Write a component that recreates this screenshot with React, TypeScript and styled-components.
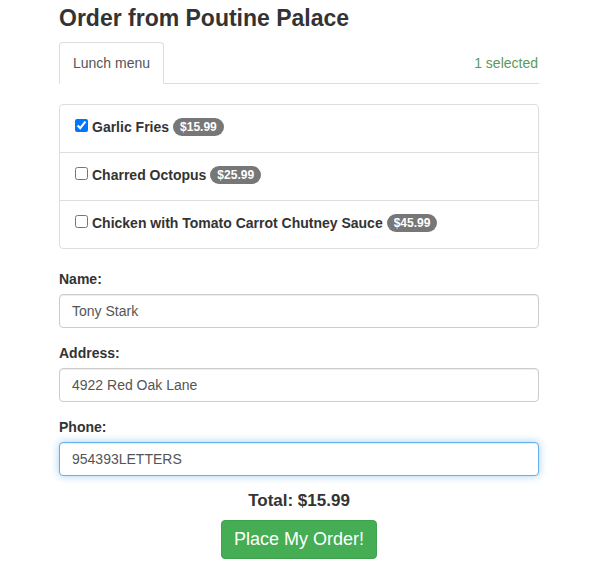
import React from "react";
import styled, { createGlobalStyle, css } from "styled-components";

const GlobalStyle = createGlobalStyle`
  body {
    margin: 0;
    background: #fff;
    color: #333;
    font-family: "Liberation Sans", Arial, sans-serif;
    font-size: 14px;
    line-height: 20px;
  }
  * {
    box-sizing: border-box;
  }
`;

const Page = styled.div`
  width: 480px;
  margin-left: 59px;
  padding-top: 6px;
`;

const Title = styled.h3`
  margin: 0 0 11px;
  font-size: 23px;
  line-height: 1.1;
  font-weight: bold;
  color: #333;
`;

const Tabs = styled.div`
  display: flex;
  align-items: center;
  border-bottom: 1px solid #ddd;
`;

const Tab = styled.div`
  margin-bottom: -1px;
  padding: 10px 13px;
  border: 1px solid #ddd;
  border-bottom-color: transparent;
  border-radius: 4px 4px 0 0;
  background: #fff;
  color: #555;
`;

const SelectedCount = styled.span`
  margin-left: auto;
  margin-right: 1px;
  color: #5a9a5a;
`;

const MenuList = styled.div`
  margin: 20px 0;
  border: 1px solid #ddd;
  border-radius: 4px;
`;

const MenuItem = styled.label`
  display: flex;
  align-items: flex-start;
  padding: 12px 15px 15px;
  font-weight: bold;
  & + & {
    border-top: 1px solid #ddd;
  }
`;

const Check = styled.input`
  width: 13px;
  height: 13px;
  margin: 2px 4px 0 0;
`;

const Badge = styled.span`
  display: inline-block;
  margin-left: 4px;
  padding: 3px 7px;
  font-size: 12px;
  line-height: 1;
  font-weight: bold;
  color: #fff;
  background: #777;
  border-radius: 10px;
  vertical-align: 1px;
`;

const FormGroup = styled.div`
  margin-bottom: 15px;
`;

const FieldLabel = styled.label`
  display: block;
  margin-bottom: 5px;
  font-weight: bold;
`;

const TextInput = styled.input<{ $focused?: boolean }>`
  display: block;
  width: 100%;
  height: 34px;
  padding: 6px 12px;
  font-family: inherit;
  font-size: 14px;
  line-height: 20px;
  color: #555;
  background: #fff;
  border: 1px solid #ccc;
  border-radius: 4px;
  box-shadow: inset 0 1px 1px rgba(0, 0, 0, 0.075);
  outline: none;
  ${(p) =>
    p.$focused &&
    css`
      border-color: #66afe9;
      box-shadow: inset 0 1px 1px rgba(0, 0, 0, 0.075),
        0 0 8px rgba(102, 175, 233, 0.6);
    `}
`;

const Summary = styled.div`
  display: flex;
  flex-direction: column;
  align-items: center;
`;

const Total = styled.h4`
  margin: 1px 0 9px;
  font-size: 17px;
  line-height: 1.1;
  font-weight: bold;
`;

const OrderButton = styled.button`
  padding: 6px 12px 7px;
  font-family: inherit;
  font-size: 18px;
  line-height: 24px;
  color: #fff;
  background: #45ad54;
  border: 1px solid #3fa34d;
  border-radius: 4px;
  cursor: pointer;
`;

const items = [
  { name: "Garlic Fries", price: 15.99, checked: true },
  { name: "Charred Octopus", price: 25.99, checked: false },
  { name: "Chicken with Tomato Carrot Chutney Sauce", price: 45.99, checked: false },
];

const fields = [
  { label: "Name:", value: "Tony Stark" },
  { label: "Address:", value: "4922 Red Oak Lane" },
  { label: "Phone:", value: "954393LETTERS", focused: true },
];

export default function App() {
  const selected = items.filter((i) => i.checked);
  const total = selected.reduce((sum, i) => sum + i.price, 0);

  return (
    <Page>
      <GlobalStyle />
      <Title>Order from Poutine Palace</Title>
      <Tabs>
        <Tab>Lunch menu</Tab>
        <SelectedCount>{selected.length} selected</SelectedCount>
      </Tabs>
      <MenuList>
        {items.map((item) => (
          <MenuItem key={item.name}>
            <Check type="checkbox" defaultChecked={item.checked} />
            <span>
              {item.name}
              <Badge>${item.price.toFixed(2)}</Badge>
            </span>
          </MenuItem>
        ))}
      </MenuList>
      {fields.map((f) => (
        <FormGroup key={f.label}>
          <FieldLabel>{f.label}</FieldLabel>
          <TextInput defaultValue={f.value} $focused={f.focused} />
        </FormGroup>
      ))}
      <Summary>
        <Total>Total: ${total.toFixed(2)}</Total>
        <OrderButton type="button">Place My Order!</OrderButton>
      </Summary>
    </Page>
  );
}
